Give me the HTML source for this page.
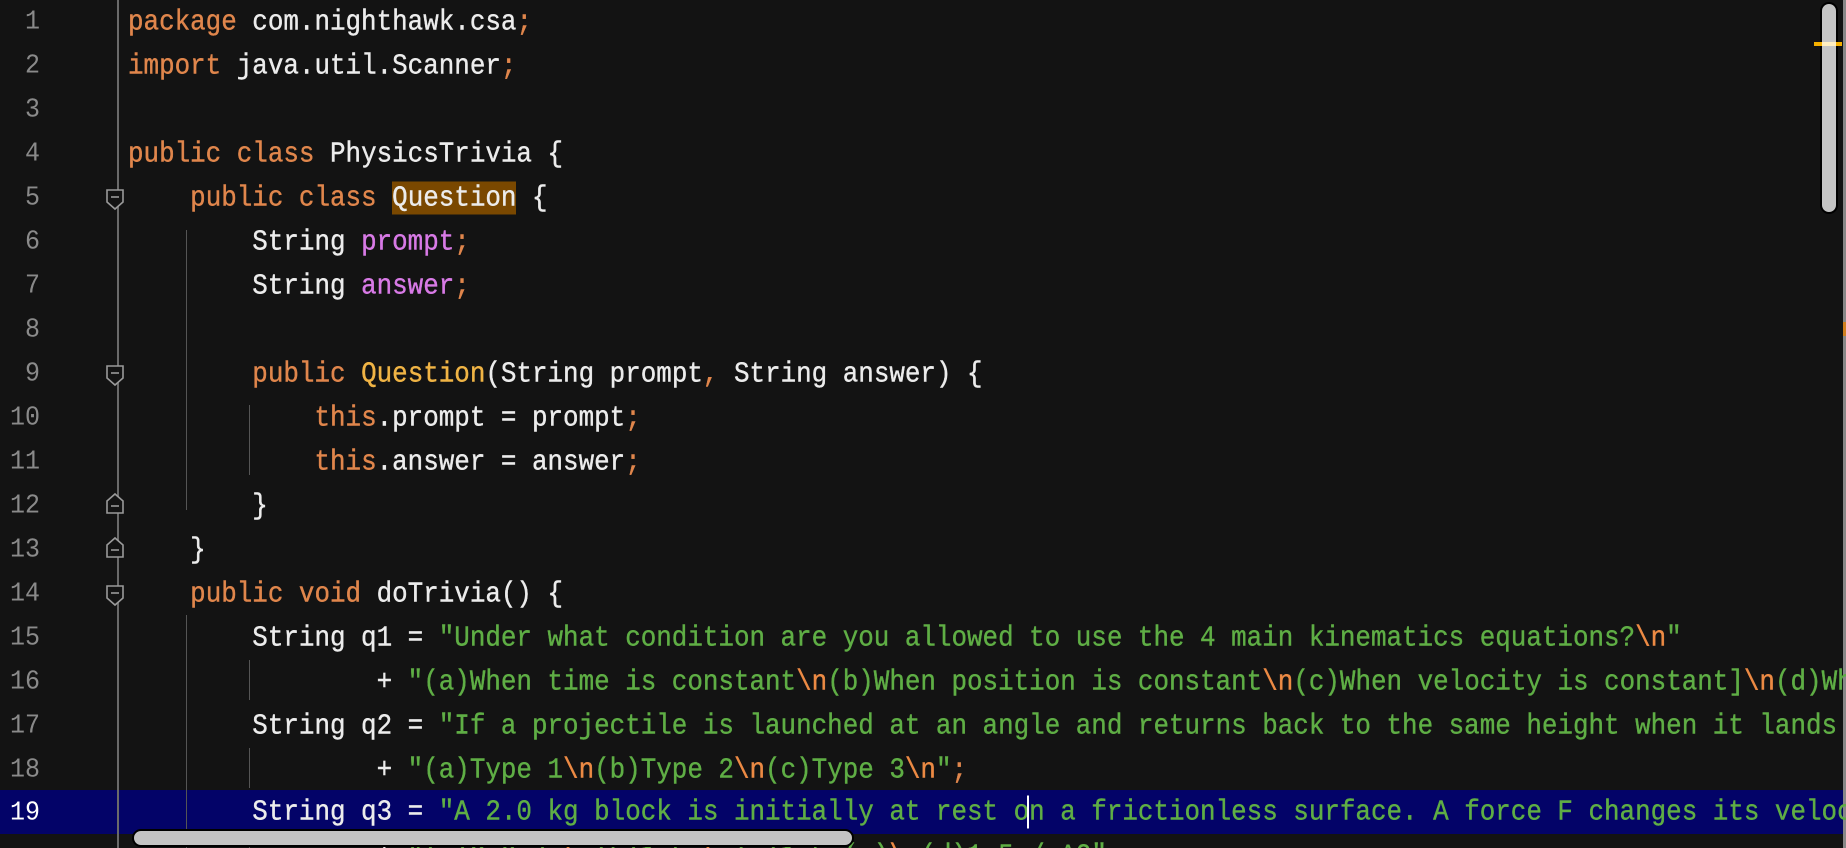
<!DOCTYPE html>
<html><head><meta charset="utf-8"><style>
html,body{margin:0;padding:0;background:#131313;width:1846px;height:848px;overflow:hidden;position:relative}
.l{position:absolute;left:128px;height:44px;line-height:44px;white-space:pre;font-family:"Liberation Mono",monospace;font-size:25.9px;color:#ececec;-webkit-text-stroke:0.35px currentColor;transform:scaleY(1.1);transform-origin:0 50%}
.n{position:absolute;width:40px;text-align:right;left:0;height:44px;line-height:44px;font-family:"Liberation Mono",monospace;font-size:25px;color:#8a8a8a;transform:scaleY(1.08)}
.k{color:#e0864c}.s{color:#5fae45}.e{color:#ec8a44}.f{color:#d87ae6}.m{color:#f0b445}
.hl{background:#7a4800}
.g{position:absolute;width:1px;background:#555}
</style></head><body>
<div style="position:absolute;left:0;top:790px;width:1846px;height:44px;background:#030368"></div>
<div style="position:absolute;left:117px;top:0;width:2px;height:848px;background:#6a6a6a"></div>
<div class="g" style="left:186px;top:230px;height:280px"></div>
<div class="g" style="left:249px;top:405px;height:70px"></div>
<div class="g" style="left:186px;top:615px;height:233px"></div>
<div class="g" style="left:249px;top:660px;height:40px"></div>
<div class="g" style="left:249px;top:748px;height:40px"></div>
<div class="g" style="left:249px;top:836px;height:20px"></div>
<div style="position:absolute;left:1843px;top:0;width:3px;height:848px;background:#888"></div>

<svg style="position:absolute;left:0;top:0" width="140" height="848">
<g fill="#131313" stroke="#9a9a9a" stroke-width="1.6">
<path d="M107 190h16v12l-8 7l-8-7z"/><path d="M111 197h8"/>
<path d="M107 366h16v12l-8 7l-8-7z"/><path d="M111 373h8"/>
<path d="M107 586h16v12l-8 7l-8-7z"/><path d="M111 593h8"/>
<path d="M107 513h16v-12l-8-7l-8 7z"/><path d="M111 506h8"/>
<path d="M107 557h16v-12l-8-7l-8 7z"/><path d="M111 550h8"/>
</g></svg>

<div class="n" style="top:0">1</div><div class="n" style="top:44px">2</div><div class="n" style="top:88px">3</div><div class="n" style="top:132px">4</div><div class="n" style="top:176px">5</div><div class="n" style="top:220px">6</div><div class="n" style="top:264px">7</div><div class="n" style="top:308px">8</div><div class="n" style="top:352px">9</div><div class="n" style="top:396px">10</div><div class="n" style="top:440px">11</div><div class="n" style="top:484px">12</div><div class="n" style="top:528px">13</div><div class="n" style="top:572px">14</div><div class="n" style="top:616px">15</div><div class="n" style="top:660px">16</div><div class="n" style="top:704px">17</div><div class="n" style="top:748px">18</div><div class="n" style="top:791px;color:#fff">19</div>

<div class="l" style="top:0"><span class="k">package</span> com.nighthawk.csa<span class="k">;</span></div>
<div class="l" style="top:44px"><span class="k">import</span> java.util.Scanner<span class="k">;</span></div>
<div class="l" style="top:132px"><span class="k">public class</span> PhysicsTrivia {</div>
<div class="l" style="top:176px">    <span class="k">public class</span> <span class="hl">Question</span> {</div>
<div class="l" style="top:220px">        String <span class="f">prompt</span><span class="k">;</span></div>
<div class="l" style="top:264px">        String <span class="f">answer</span><span class="k">;</span></div>
<div class="l" style="top:352px">        <span class="k">public</span> <span class="m">Question</span>(String prompt<span class="k">,</span> String answer) {</div>
<div class="l" style="top:396px">            <span class="k">this</span>.prompt = prompt<span class="k">;</span></div>
<div class="l" style="top:440px">            <span class="k">this</span>.answer = answer<span class="k">;</span></div>
<div class="l" style="top:484px">        }</div>
<div class="l" style="top:528px">    }</div>
<div class="l" style="top:572px">    <span class="k">public void</span> doTrivia() {</div>
<div class="l" style="top:616px">        String q1 = <span class="s">"Under what condition are you allowed to use the 4 main kinematics equations?<span class="e">\n</span>"</span></div>
<div class="l" style="top:660px">                + <span class="s">"(a)When time is constant<span class="e">\n</span>(b)When position is constant<span class="e">\n</span>(c)When velocity is constant]<span class="e">\n</span>(d)When</span></div>
<div class="l" style="top:704px">        String q2 = <span class="s">"If a projectile is launched at an angle and returns back to the same height when it lands</span></div>
<div class="l" style="top:748px">                + <span class="s">"(a)Type 1<span class="e">\n</span>(b)Type 2<span class="e">\n</span>(c)Type 3<span class="e">\n</span>"</span><span class="k">;</span></div>
<div class="l" style="top:790px">        String q3 = <span class="s">"A 2.0 kg block is initially at rest o<span style="border-left:2px solid #fff;margin-left:-2px"></span>n a frictionless surface. A force F changes its velocity</span></div>
<div class="l" style="top:834px">                + <span class="s">"(a)3.0m/s<span class="e">\n</span>(b)1.5m<span class="e">\n</span>(c)1.5m(s)<span class="e">\n</span>(d)1.5m/s^2"</span></div>

<div style="position:absolute;left:132px;top:829px;width:718px;height:14px;background:#c4c4c4;border:2px solid #000;border-radius:9px"></div>
<div style="position:absolute;left:1820px;top:2px;width:14px;height:208px;background:#c4c4c4;border:2px solid #000;border-radius:9px"></div>
<div style="position:absolute;left:1814px;top:42px;width:28px;height:4px;background:#f5b000"></div>
<div style="position:absolute;left:1822px;top:42px;width:14px;height:4px;background:#ffeec0"></div>
<div style="position:absolute;left:1843px;top:322px;width:3px;height:14px;background:#d08020"></div>
</body></html>
